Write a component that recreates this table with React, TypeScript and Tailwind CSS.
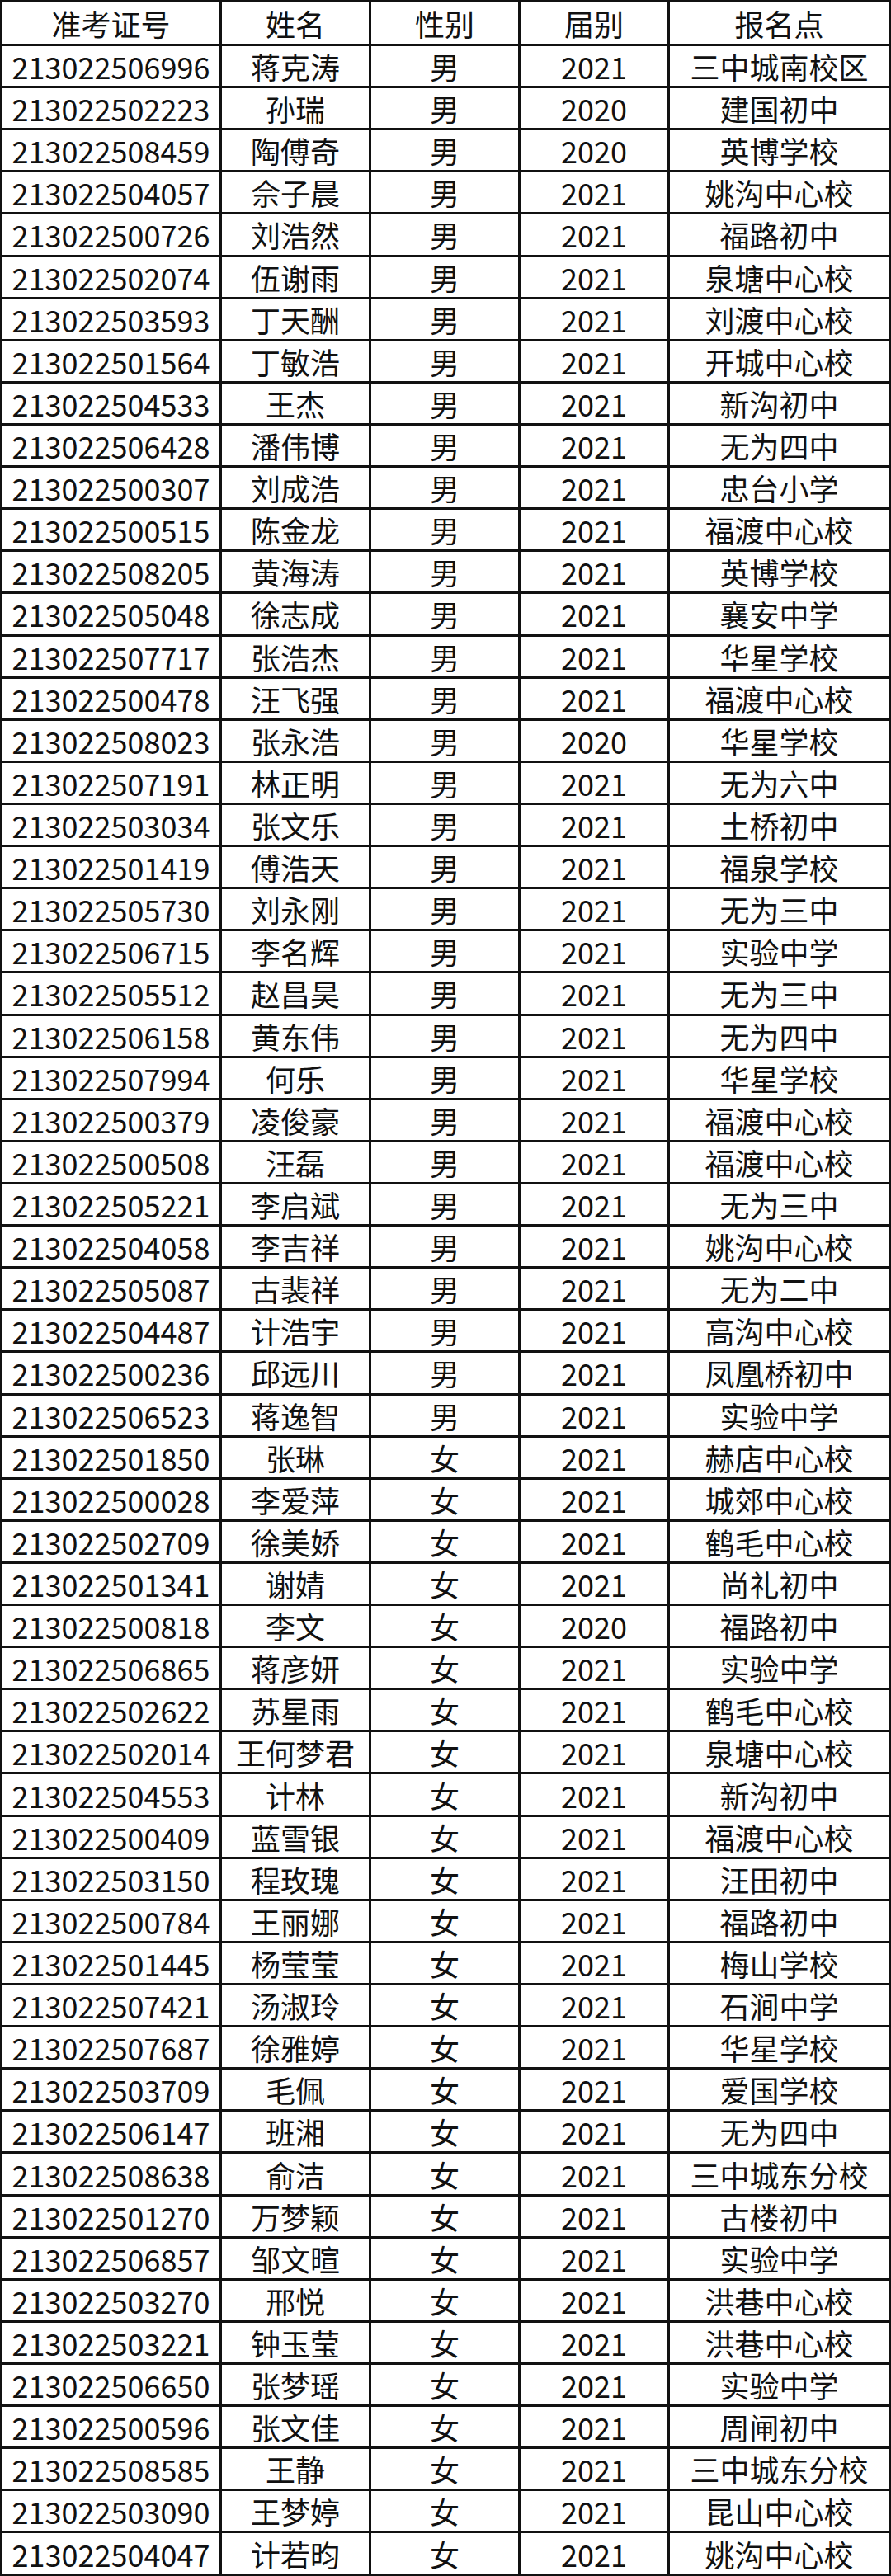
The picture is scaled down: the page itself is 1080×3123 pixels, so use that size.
const rows: [string, string, string, string, string][] = [
  ["213022506996", "蒋克涛", "男", "2021", "三中城南校区"],
  ["213022502223", "孙瑞", "男", "2020", "建国初中"],
  ["213022508459", "陶傅奇", "男", "2020", "英博学校"],
  ["213022504057", "佘子晨", "男", "2021", "姚沟中心校"],
  ["213022500726", "刘浩然", "男", "2021", "福路初中"],
  ["213022502074", "伍谢雨", "男", "2021", "泉塘中心校"],
  ["213022503593", "丁天酬", "男", "2021", "刘渡中心校"],
  ["213022501564", "丁敏浩", "男", "2021", "开城中心校"],
  ["213022504533", "王杰", "男", "2021", "新沟初中"],
  ["213022506428", "潘伟博", "男", "2021", "无为四中"],
  ["213022500307", "刘成浩", "男", "2021", "忠台小学"],
  ["213022500515", "陈金龙", "男", "2021", "福渡中心校"],
  ["213022508205", "黄海涛", "男", "2021", "英博学校"],
  ["213022505048", "徐志成", "男", "2021", "襄安中学"],
  ["213022507717", "张浩杰", "男", "2021", "华星学校"],
  ["213022500478", "汪飞强", "男", "2021", "福渡中心校"],
  ["213022508023", "张永浩", "男", "2020", "华星学校"],
  ["213022507191", "林正明", "男", "2021", "无为六中"],
  ["213022503034", "张文乐", "男", "2021", "土桥初中"],
  ["213022501419", "傅浩天", "男", "2021", "福泉学校"],
  ["213022505730", "刘永刚", "男", "2021", "无为三中"],
  ["213022506715", "李名辉", "男", "2021", "实验中学"],
  ["213022505512", "赵昌昊", "男", "2021", "无为三中"],
  ["213022506158", "黄东伟", "男", "2021", "无为四中"],
  ["213022507994", "何乐", "男", "2021", "华星学校"],
  ["213022500379", "凌俊豪", "男", "2021", "福渡中心校"],
  ["213022500508", "汪磊", "男", "2021", "福渡中心校"],
  ["213022505221", "李启斌", "男", "2021", "无为三中"],
  ["213022504058", "李吉祥", "男", "2021", "姚沟中心校"],
  ["213022505087", "古裴祥", "男", "2021", "无为二中"],
  ["213022504487", "计浩宇", "男", "2021", "高沟中心校"],
  ["213022500236", "邱远川", "男", "2021", "凤凰桥初中"],
  ["213022506523", "蒋逸智", "男", "2021", "实验中学"],
  ["213022501850", "张琳", "女", "2021", "赫店中心校"],
  ["213022500028", "李爱萍", "女", "2021", "城郊中心校"],
  ["213022502709", "徐美娇", "女", "2021", "鹤毛中心校"],
  ["213022501341", "谢婧", "女", "2021", "尚礼初中"],
  ["213022500818", "李文", "女", "2020", "福路初中"],
  ["213022506865", "蒋彦妍", "女", "2021", "实验中学"],
  ["213022502622", "苏星雨", "女", "2021", "鹤毛中心校"],
  ["213022502014", "王何梦君", "女", "2021", "泉塘中心校"],
  ["213022504553", "计林", "女", "2021", "新沟初中"],
  ["213022500409", "蓝雪银", "女", "2021", "福渡中心校"],
  ["213022503150", "程玫瑰", "女", "2021", "汪田初中"],
  ["213022500784", "王丽娜", "女", "2021", "福路初中"],
  ["213022501445", "杨莹莹", "女", "2021", "梅山学校"],
  ["213022507421", "汤淑玲", "女", "2021", "石涧中学"],
  ["213022507687", "徐雅婷", "女", "2021", "华星学校"],
  ["213022503709", "毛佩", "女", "2021", "爱国学校"],
  ["213022506147", "班湘", "女", "2021", "无为四中"],
  ["213022508638", "俞洁", "女", "2021", "三中城东分校"],
  ["213022501270", "万梦颖", "女", "2021", "古楼初中"],
  ["213022506857", "邹文暄", "女", "2021", "实验中学"],
  ["213022503270", "邢悦", "女", "2021", "洪巷中心校"],
  ["213022503221", "钟玉莹", "女", "2021", "洪巷中心校"],
  ["213022506650", "张梦瑶", "女", "2021", "实验中学"],
  ["213022500596", "张文佳", "女", "2021", "周闸初中"],
  ["213022508585", "王静", "女", "2021", "三中城东分校"],
  ["213022503090", "王梦婷", "女", "2021", "昆山中心校"],
  ["213022504047", "计若昀", "女", "2021", "姚沟中心校"],
];

const header = ["准考证号", "姓名", "性别", "届别", "报名点"];

function Cell({ text, tall }: { text: string; tall?: boolean }) {
  return (
    <div
      className={`flex items-center justify-center border-r-[3px] border-b-[3px] border-[#111] leading-none whitespace-nowrap ${
        tall ? "h-[53px]" : "h-[51.12px]"
      }`}
    >
      {text}
    </div>
  );
}

export default function App() {
  return (
    <div className="w-[1080px] bg-white">
      <div
        className="grid grid-cols-[266px_181px_181px_181px_1fr] border-l-[3px] border-t-[3px] border-[#111] text-[36px] text-[#111]"
        style={{ fontFamily: '"Noto Sans CJK SC", "Noto Sans", sans-serif' }}
      >
        {header.map((h) => (
          <Cell key={h} text={h} tall />
        ))}
        {rows.map((r) => r.map((c, i) => <Cell key={r[0] + i} text={c} />))}
      </div>
    </div>
  );
}
